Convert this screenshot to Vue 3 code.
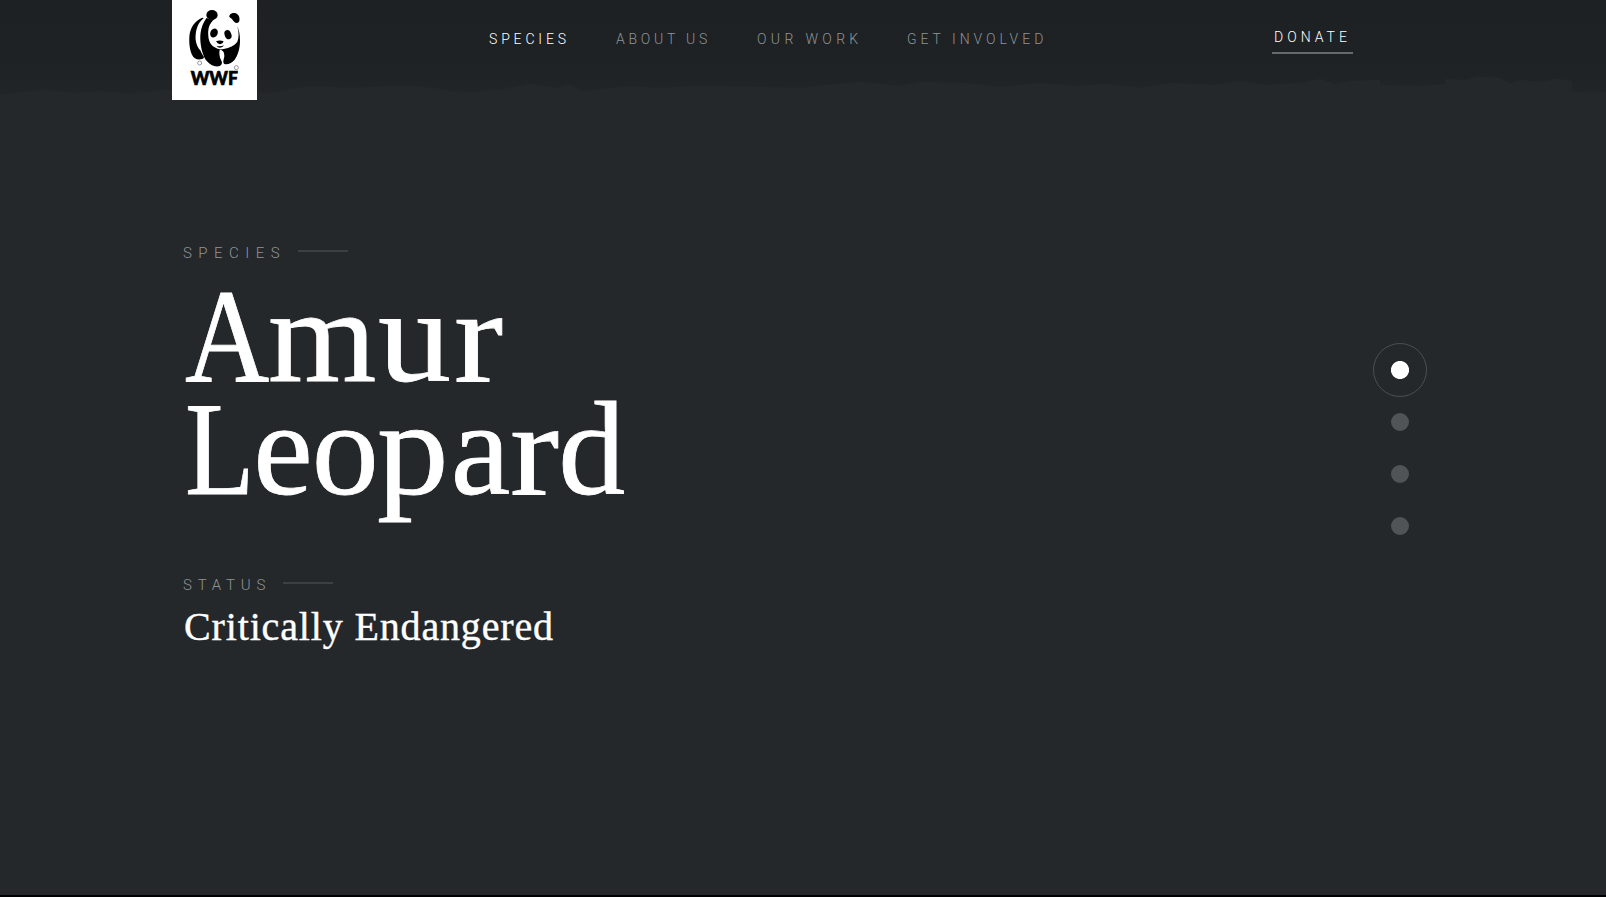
<template>
  <main class="page">
    <header class="header">
      <svg class="brush" viewBox="0 0 1606 110" preserveAspectRatio="none" aria-hidden="true">
        <defs>
          <linearGradient id="ink" x1="0" y1="0" x2="0" y2="1">
            <stop offset="0" stop-color="#1d2124" />
            <stop offset=".65" stop-color="#1e2225" />
            <stop offset="1" stop-color="#212528" />
          </linearGradient>
        </defs>
        <path fill="url(#ink)" d="M0 0H1606V92L1590 93L1572 91V81L1556 79L1540 82L1520 80L1510 84L1500 78L1480 77L1465 80L1445 79V84L1420 86L1380 85V80L1350 81L1335 84L1320 79L1300 83L1265 85L1240 81L1215 85L1170 83L1140 88L1105 84L1075 86L1040 83L1000 87L965 83L920 82L900 86L860 82L825 85L803 88L760 87L720 86L695 86L660 88L630 86L605 89L580 91L570 84L555 88L530 84L505 89L460 93L440 89L415 86L390 86L350 88L310 86L270 93L160 90L130 94L100 91L75 93L45 90L20 92L0 95Z" />
      </svg>
      <a class="logo" aria-label="WWF">
        <svg viewBox="21 0 255 300" width="85" height="100">
          <path d="M112 53C90 61 74 84 73 112C72 132 75 153 81 164C85 174 96 180 107 178C114 177 117 174 117 171C113 165 109 159 106 151C96 140 90 122 92 104C94 83 101 67 116 55Z" />
          <path d="M125 54C111 72 105 94 106 119C107 143 114 170 126 184C135 195 151 202 164 198C171 195 173 188 168 180C163 170 162 159 164 150C173 149 178 156 178 168C177 178 172 187 178 192C188 195 202 188 209 179C218 167 225 146 225 122C225 103 222 91 217 78C222 97 222 114 217 125C208 138 194 143 176 147Q161 151 149 142C138 136 131 124 130 109C128 91 131 76 141 62Z" />
          <ellipse cx="141" cy="45" rx="17" ry="15" />
          <path d="M193 51C192 43 200 38 209 39C220 41 226 51 223 63C221 70 213 70 208 66C203 59 199 55 193 51Z" />
          <path d="M124 55Q132 60 148 56L130 78Z" />
          <ellipse cx="147" cy="99" rx="11" ry="14" transform="rotate(24 147 99)" />
          <ellipse cx="189" cy="104" rx="10" ry="14" transform="rotate(-22 189 104)" />
          <path d="M153 124Q164 119 176 124Q174 131 165 133Q157 131 153 124Z" />
          <path d="M154 137Q165 141 177 136Q173 143 165 143Q158 143 154 137Z" />
          <g fill="none" stroke="#555" stroke-width="1.8"><circle cx="104" cy="189" r="6" /><circle cx="214" cy="203" r="6" /></g>
          <text class="mark" x="77" y="254" textLength="142" lengthAdjust="spacingAndGlyphs">WWF</text>
        </svg>
      </a>
      <nav class="nav">
        <a v-for="item in items" :key="item.label" :class="[item.name, { active: item.active }]">{{ item.label }}</a>
      </nav>
      <a class="donate">DONATE</a>
    </header>

    <div class="body">
      <section class="hero">
        <div class="label species-label">SPECIES<i></i></div>
        <h1>
          <span class="line"><span class="k k-a">A</span><span class="k k-m">m</span><span class="k k-u">u</span><span class="k k-r">r</span></span>
          <span class="line"><span class="k k-l">L</span><span class="k-eo">eo</span><span class="k k-p">p</span>a<span class="k k-r">r</span>d</span>
        </h1>
        <div class="label status-label">STATUS<i></i></div>
        <p class="status">Critically Endangered</p>
      </section>
      <aside class="pager">
        <b v-for="n in 4" :key="n" :class="{ current: n === 1 }"></b>
      </aside>
    </div>
  </main>
</template>

<script setup>
const items = [
  { label: 'SPECIES', name: 'n-species', active: true },
  { label: 'ABOUT US', name: 'n-about' },
  { label: 'OUR WORK', name: 'n-work' },
  { label: 'GET INVOLVED', name: 'n-involved' },
]
</script>

<style>
body { margin: 0; background: #24282b; overflow: hidden; }
</style>

<style scoped>
.page {
  box-sizing: border-box;
  height: 897px;
  background: #24282b;
  border-bottom: 2px solid #000;
  color: #fff;
  font-family: Roboto, "Liberation Sans", sans-serif;
}
.header { position: relative; display: flex; align-items: flex-start; height: 110px; padding-left: 172px; }
.brush { position: absolute; inset: 0; width: 100%; height: 110px; }
.logo { position: relative; display: block; width: 85px; height: 100px; background: #fff; }
.logo svg { display: block; }
.mark { font: 900 55px Lato, "Liberation Sans", sans-serif; stroke: #000; stroke-width: 2px; }
.nav { position: relative; display: flex; width: 783px; margin-left: 232px; padding-top: 29px; font-size: 14px; line-height: 20px; font-weight: 300; color: #909395; white-space: nowrap; }
.nav .active { color: #fff; }
.n-species { width: 127px; letter-spacing: 3.85px; }
.n-about { width: 141px; letter-spacing: 3.75px; }
.n-work { width: 150px; letter-spacing: 4.35px; }
.n-involved { letter-spacing: 3.95px; }
.donate { position: relative; box-sizing: border-box; width: 81px; height: 54px; padding: 27px 0 0 2px; border-bottom: 2px solid #676a6c; font-size: 14px; line-height: 20px; font-weight: 300; letter-spacing: 4px; white-space: nowrap; }
.body { display: flex; justify-content: space-between; padding: 133px 179px 0 183px; }
.label { display: flex; align-items: center; height: 20px; font-size: 15px; line-height: 20px; font-weight: 300; color: #909395; }
.label i { width: 50px; height: 2px; margin-bottom: 4px; background: #3d4043; }
.species-label { letter-spacing: 6.45px; }
.species-label i { margin-left: 12px; }
.status-label { margin-top: 69px; letter-spacing: 5.8px; }
.status-label i { margin-left: 12px; }
h1 { margin: 17px 0 0; font: 400 134px/113px "Liberation Serif", serif; white-space: nowrap; -webkit-text-stroke: .8px #fff; }
.line { display: block; height: 113px; padding-left: 1.5px; }
/* Per-letter width and kerning of the display title */
.k { display: inline-block; transform-origin: 0 50%; }
.k-a { margin-right: -13.5px; transform: scaleX(.87); }
.k-m { margin-right: 6px; transform: scaleX(1.04); }
.k-u { margin-right: 8.5px; transform: scaleX(1.09); }
.k-l { margin-right: -13px; transform: scaleX(.85); }
.k-eo { letter-spacing: -1.2px; }
.k-p { margin-right: 6.3px; transform: scaleX(1.07); }
.k-r { margin-right: 3.3px; transform: scaleX(1.1); }
.status { margin: 6px 0 0; font: 400 40px/52px "Liberation Serif", serif; letter-spacing: .85px; padding-left: 1px; white-space: nowrap; -webkit-text-stroke: .4px #fff; }
.pager { display: flex; flex-direction: column; align-items: center; width: 54px; padding-top: 99.5px; gap: 34px; }
.pager b { width: 18px; height: 18px; border-radius: 50%; background: #505457; }
.pager .current { box-sizing: border-box; width: 54px; height: 54px; margin-bottom: -18px; border: 1px solid #4b4f52; background: radial-gradient(circle, #fff 8.6px, transparent 9.4px); }
</style>
